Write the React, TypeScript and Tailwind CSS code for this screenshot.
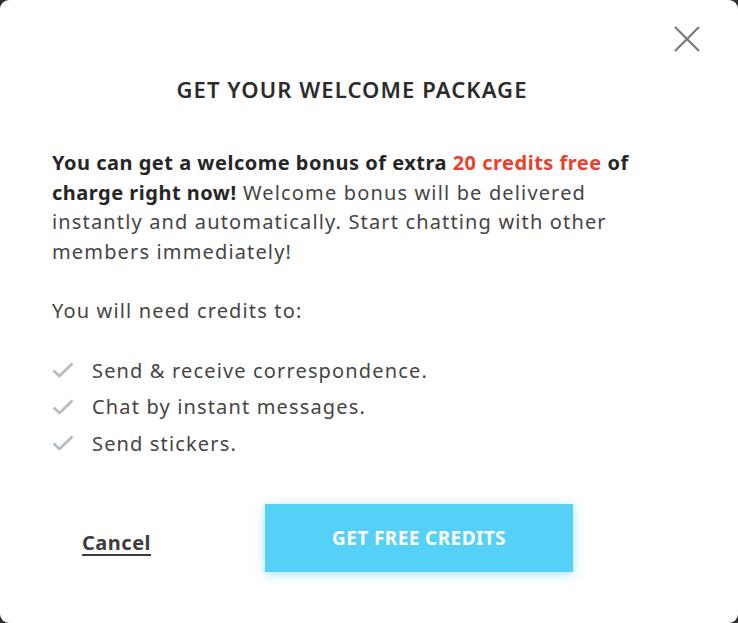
export default function App() {
  const items = [
    "Send & receive correspondence.",
    "Chat by instant messages.",
    "Send stickers.",
  ];

  return (
    <main className="h-screen w-full bg-[#2e2e2e]">
      <section
        className="relative h-full w-full rounded-[9px] bg-white text-[#454545]"
        style={{ fontFamily: '"Noto Sans", "Open Sans", sans-serif' }}
      >
        {/* close */}
        <button className="absolute right-[38px] top-[26px] h-[26px] w-[26px]">
          <svg viewBox="0 0 26 26" className="h-[26px] w-[26px]">
            <path d="M1 1 L25 25 M25 1 L1 25" stroke="#7a7a7a" strokeWidth="2.2" fill="none" />
          </svg>
        </button>

        <div className="px-[52px] pt-[72px]">
          <h2 className="mr-[34px] text-center text-[22px] font-semibold leading-[34px] tracking-[1.1px] text-[#2b2b2b]">
            GET YOUR WELCOME PACKAGE
          </h2>

          <p className="mt-[42px] text-[20px] leading-[29.5px] tracking-[1.15px]">
            <b className="font-bold tracking-[0.5px] text-[#262626]">
              You can get a welcome bonus of extra <span className="text-[#e8412c]">20 credits free</span> of
              <br />
              charge right now!
            </b>{" "}
            Welcome bonus will be delivered
            <br />
            instantly and automatically. Start chatting with other
            <br />
            members immediately!
          </p>

          <p className="mt-[30px] text-[20px] leading-[29.5px] tracking-[1.15px]">You will need credits to:</p>

          <ul className="mt-[30px] grid gap-[7px]">
            {items.map((t) => (
              <li key={t} className="flex items-center text-[20px] leading-[29.5px] tracking-[1.15px]">
                <svg viewBox="0 0 22 16" className="h-[16px] w-[22px] shrink-0">
                  <path d="M1.5 8.5 L7.5 14 L20.5 1.5" stroke="#b4bcc4" strokeWidth="2.8" fill="none" strokeLinejoin="round" />
                </svg>
                <span className="ml-[18px]">{t}</span>
              </li>
            ))}
          </ul>

          <div className="mt-[45px] flex items-center">
            <a className="ml-[30px] mt-[10px] text-[20px] font-bold tracking-[0.5px] text-[#3d3d3d] underline underline-offset-[4px]">
              Cancel
            </a>
            <button className="ml-[114px] mt-[1px] h-[68px] w-[308px] bg-[#55d0f6] text-[19px] font-bold tracking-[0.4px] text-white shadow-[0_2px_10px_rgba(85,208,246,0.55)]">
              GET FREE CREDITS
            </button>
          </div>
        </div>
      </section>
    </main>
  );
}
